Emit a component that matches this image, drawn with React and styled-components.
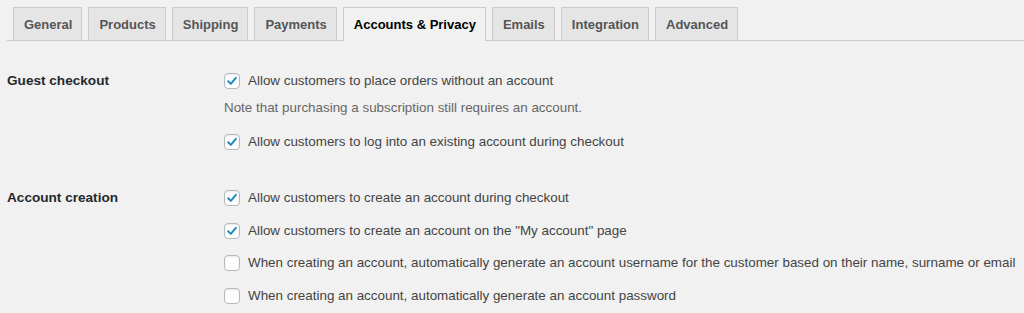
import React from 'react';
import styled, { createGlobalStyle } from 'styled-components';

const Global = createGlobalStyle`
  html, body {
    margin: 0;
    padding: 0;
    background: #f1f1f1;
  }
  body {
    font-family: 'Liberation Sans', Arial, sans-serif;
    font-size: 13.4px;
    color: #444;
  }
`;

const Page = styled.div`
  width: 1024px;
  height: 313px;
  overflow: hidden;
  padding-top: 7px;
  box-sizing: border-box;
`;

const Tabs = styled.nav`
  display: flex;
  gap: 6px;
  margin-left: 7px;
  padding-left: 6px;
  border-bottom: 1px solid #ccc;
`;

const Tab = styled.div`
  padding: 0 9px 0 10px;
  box-sizing: border-box;
  display: flex;
  align-items: center;
  font-weight: 700;
  font-size: 13px;
  color: ${p => (p.active ? '#000' : '#555')};
  background: ${p => (p.active ? '#f1f1f1' : '#e5e5e5')};
  border: 1px solid #ccc;
  border-bottom: none;
  margin-bottom: ${p => (p.active ? '-1px' : '0')};
  height: ${p => (p.active ? '34px' : '33px')};
`;

const Form = styled.div`
  padding: 30px 0 0 7px;
  display: flex;
  flex-direction: column;
  gap: 36px;
`;

const Section = styled.div`
  display: grid;
  grid-template-columns: 217px 1fr;
`;

const Label = styled.div`
  font-weight: 700;
  font-size: 13.6px;
  color: #23282d;
  line-height: 20px;
`;

const Options = styled.div`
  display: flex;
  flex-direction: column;
  gap: ${p => p.gap || 12.5}px;
`;

const Row = styled.label`
  display: flex;
  align-items: center;
  gap: 8px;
  line-height: 20px;
  height: 20px;
  white-space: nowrap;
  color: #444;
`;

const Box = styled.span`
  width: 16px;
  height: 16px;
  box-sizing: border-box;
  border: 1px solid #b4b9be;
  border-radius: 4px;
  background: #fff;
  box-shadow: inset 0 1px 2px rgba(0, 0, 0, 0.1);
  display: flex;
  align-items: center;
  justify-content: center;
  flex: none;
`;

const Note = styled.div`
  color: #666;
  line-height: 20px;
  margin-top: -5px;
  margin-bottom: 2px;
`;

const Check = ({ on }) => (
  <Box>
    {on && (
      <svg width="12" height="12" viewBox="0 0 12 12">
        <path d="M2.2 6.3 L4.8 8.9 L9.9 2.8" fill="none" stroke="#1e8cbe" strokeWidth="2" strokeLinecap="round" strokeLinejoin="round" />
      </svg>
    )}
  </Box>
);

const tabs = ['General', 'Products', 'Shipping', 'Payments', 'Accounts & Privacy', 'Emails', 'Integration', 'Advanced'];

export default function App() {
  return (
    <Page>
      <Global />
      <Tabs>
        {tabs.map(t => (
          <Tab key={t} active={t === 'Accounts & Privacy'}>{t}</Tab>
        ))}
      </Tabs>
      <Form>
        <Section>
          <Label>Guest checkout</Label>
          <Options gap={12}>
            <Row><Check on />Allow customers to place orders without an account</Row>
            <Note>Note that purchasing a subscription still requires an account.</Note>
            <Row><Check on />Allow customers to log into an existing account during checkout</Row>
          </Options>
        </Section>
        <Section>
          <Label>Account creation</Label>
          <Options>
            <Row><Check on />Allow customers to create an account during checkout</Row>
            <Row><Check on />Allow customers to create an account on the "My account" page</Row>
            <Row><Check />When creating an account, automatically generate an account username for the customer based on their name, surname or email</Row>
            <Row><Check />When creating an account, automatically generate an account password</Row>
          </Options>
        </Section>
      </Form>
    </Page>
  );
}
